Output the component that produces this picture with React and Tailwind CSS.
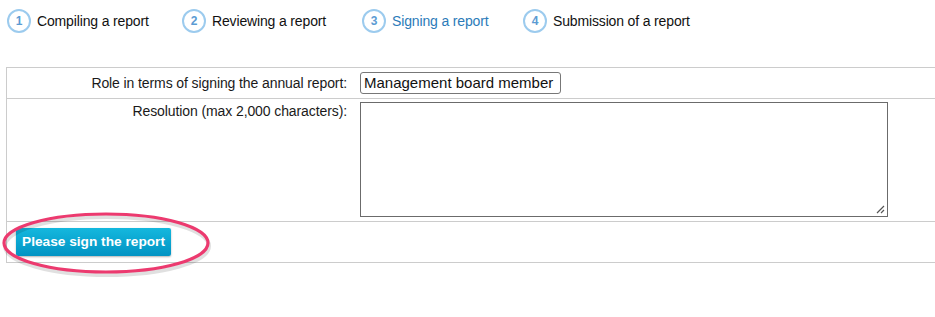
export default function App() {
  const steps = [
    { n: 1, label: "Compiling a report", w: "w-[175px]", active: false },
    { n: 2, label: "Reviewing a report", w: "w-[180px]", active: false },
    { n: 3, label: "Signing a report", w: "w-[161px]", active: true },
    { n: 4, label: "Submission of a report", w: "w-[220px]", active: false },
  ];
  return (
    <div className="relative w-[935px] h-[317px] bg-white overflow-hidden font-['Liberation_Sans',Arial,sans-serif] text-[#111]">
      <div className="flex pl-[7px] pt-[9px] h-[67px]">
        {steps.map((s) => (
          <div key={s.n} className={`flex items-start ${s.w}`}>
            <div className="w-[24px] h-[24px] rounded-full border-2 border-[#9ccbee] flex items-center justify-center text-[12px] font-bold text-[#5b9bd3] leading-none">
              {s.n}
            </div>
            <span className={`ml-[6px] text-[14px] leading-[24px] tracking-[-0.15px] ${s.active ? "text-[#2b7bb9]" : "text-[#111]"}`}>
              {s.label}
            </span>
          </div>
        ))}
      </div>
      <div className="ml-[6px] border-t border-l border-b border-[#cccccc] w-[940px]">
        <div className="flex items-center border-b border-[#cccccc] h-[31px]">
          <div className="w-[344px] text-right text-[14px] tracking-[-0.1px] pr-[4px] text-[#1a1a1a] whitespace-nowrap">
            Role in terms of signing the annual report:
          </div>
          <div className="pl-[9px]">
            <div className="h-[22px] w-[201px] border border-[#777] rounded-[3px] px-[3px] text-[15px] leading-[20px] text-[#111] whitespace-nowrap">
              Management board member
            </div>
          </div>
        </div>
        <div className="flex items-start border-b border-[#cccccc] h-[123px]">
          <div className="w-[344px] text-right text-[14px] tracking-[-0.1px] pr-[4px] pt-[2px] text-[#1a1a1a] whitespace-nowrap">
            Resolution (max 2,000 characters):
          </div>
          <div className="pl-[9px] pt-[3px]">
            <div className="relative w-[528px] h-[115px] border border-[#6b6b6b]">
              <svg className="absolute right-[2px] bottom-[2px]" width="10" height="10" viewBox="0 0 10 10">
                <path d="M9 2 L2 9 M9 6 L6 9" stroke="#555" strokeWidth="1.2" />
              </svg>
            </div>
          </div>
        </div>
        <div className="h-[40px] flex items-center pl-[9px]">
          <div className="h-[28px] px-[6px] flex items-center rounded-[2px] bg-gradient-to-b from-[#14b8de] to-[#0293c3] text-white text-[13.7px] font-bold whitespace-nowrap shadow-[0_1px_2px_rgba(0,0,0,0.3)]">
            Please sign the report
          </div>
        </div>
      </div>
      <svg className="absolute left-0 top-[208px] pointer-events-none" width="220" height="75" viewBox="0 0 220 75">
        <ellipse cx="106" cy="36" rx="102" ry="29" fill="none" stroke="rgba(0,0,0,0.12)" strokeWidth="4" transform="translate(1,2)" />
        <ellipse cx="106" cy="35" rx="102" ry="29" fill="none" stroke="#ec3a6f" strokeWidth="3.2" />
      </svg>
    </div>
  );
}
